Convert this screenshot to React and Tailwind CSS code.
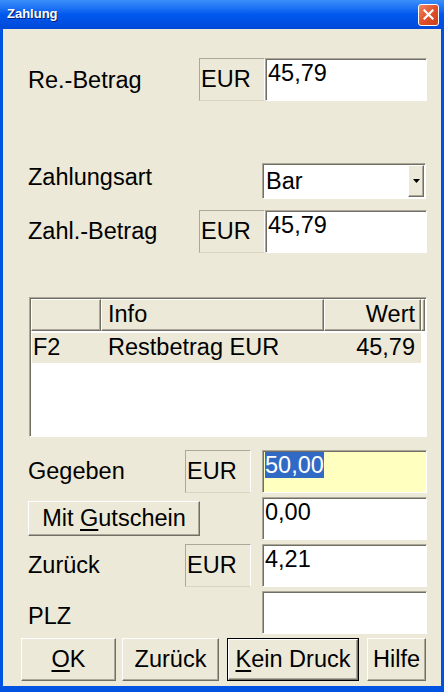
import React from "react";

// raised 3D edge of a classic dialog button
const raised =
  "border-t border-l border-t-white border-l-white border-b border-r border-b-[#716F64] border-r-[#716F64] shadow-[inset_-1px_-1px_0_#ACA899]";

// sunken edge of an edit field
const sunken =
  "border-t border-l border-t-[#ACA899] border-l-[#ACA899] border-b border-r border-b-white border-r-white shadow-[inset_1px_1px_0_#716F64]";

function CurrencyBox() {
  return (
    <div className="w-[66px] h-full flex items-center pl-[1px] border-t border-l border-t-[#ACA899] border-l-[#ACA899] border-b border-r border-b-[#D8D4C4] border-r-white bg-[#ECE9D8]">
      EUR
    </div>
  );
}

function Field({ value, width = "w-[162px]", yellow = false, selected = false }) {
  return (
    <div
      className={`${width} h-full ${sunken} ${yellow ? "bg-[#FFFFC0]" : "bg-white"} pl-[2px] pt-[1px] leading-[27px]`}
    >
      {selected ? (
        <span className="bg-[#316AC5] text-white">{value}</span>
      ) : (
        value
      )}
    </div>
  );
}

function Button({ children, className = "", isDefault = false }) {
  if (isDefault) {
    return (
      <div className={`border border-black ${className}`}>
        <div className={`w-full h-full flex items-center justify-center bg-[#ECE9D8] ${raised}`}>
          {children}
        </div>
      </div>
    );
  }
  return (
    <div className={`flex items-center justify-center bg-[#ECE9D8] ${raised} ${className}`}>
      {children}
    </div>
  );
}

export default function App() {
  return (
    <div className="w-[444px] h-[692px] flex flex-col bg-[#0053E1] px-[3px] pb-[6px] font-['Liberation_Sans',Arial,sans-serif] text-[23.5px] text-black select-none">
      {/* title bar */}
      <div className="h-[29px] -mx-[3px] flex items-center justify-between pl-[7px] pr-[5px] bg-gradient-to-b from-[#3C8FFA] via-[#0058EE] to-[#0049D8]">
        <span className="text-white font-bold text-[13px] [text-shadow:1px_1px_0_#0A1E6E] -mt-[1px]">
          Zahlung
        </span>
        <div className="w-[21px] h-[22px] rounded-[3px] border border-white bg-gradient-to-br from-[#EE8660] via-[#E0502A] to-[#C8401C] flex items-center justify-center">
          <svg width="11" height="11" viewBox="0 0 11 11">
            <path d="M1.5 1.5 L9.5 9.5 M9.5 1.5 L1.5 9.5" stroke="white" strokeWidth="2.2" strokeLinecap="square" />
          </svg>
        </div>
      </div>

      {/* dialog body */}
      <div className="flex-1 bg-[#ECE9D8] pl-[25px] pr-[14px] flex flex-col">
        <div className="mt-[29px] h-[43px] flex items-center">
          <div className="w-[171px] pt-[3px]">Re.-Betrag</div>
          <CurrencyBox />
          <Field value="45,79" />
        </div>

        <div className="mt-[62px] h-[36px] flex items-center">
          <div className="w-[234px] -mt-[6px]">Zahlungsart</div>
          <div className={`w-[164px] h-full ${sunken} bg-white flex`}>
            <div className="flex-1 flex items-center pl-[3px] pt-[1px]">Bar</div>
            <div className={`w-[16px] my-[1px] mr-[1px] bg-[#ECE9D8] ${raised} flex items-center justify-center`}>
              <svg width="7" height="4" viewBox="0 0 7 4">
                <path d="M0 0 H7 L3.5 4 Z" fill="black" />
              </svg>
            </div>
          </div>
        </div>

        <div className="mt-[11px] h-[43px] flex items-center">
          <div className="w-[171px]">Zahl.-Betrag</div>
          <CurrencyBox />
          <Field value="45,79" />
        </div>

        {/* info list */}
        <div className={`mt-[44px] ml-[1px] w-[398px] h-[140px] ${sunken} bg-white flex flex-col pt-[1px] pl-[1px]`}>
          <div className="h-[32px] flex">
            <div className={`w-[70px] bg-[#ECE9D8] ${raised}`} />
            <div className={`w-[223px] bg-[#ECE9D8] ${raised} flex items-center pl-[6px]`}>Info</div>
            <div className={`w-[97px] bg-[#ECE9D8] ${raised} flex items-center justify-end pr-[5px]`}>Wert</div>
            <div className={`w-[4px] bg-[#ECE9D8] ${raised}`} />
          </div>
          <div className="mt-[2px] ml-[1px] w-[389px] h-[30px] bg-[#ECE9D8] flex items-center">
            <div className="w-[69px] pl-[1px]">F2</div>
            <div className="w-[223px] pl-[7px]">Restbetrag EUR</div>
            <div className="w-[91px] text-right">45,79</div>
          </div>
        </div>

        <div className="mt-[13px] h-[43px] flex items-center">
          <div className="w-[157px]">Gegeben</div>
          <CurrencyBox />
          <div className="w-[11px]" />
          <Field value="50,00" width="w-[165px]" yellow selected />
        </div>

        <div className="mt-[4px] h-[43px] flex items-center">
          <Button className="w-[172px] h-[35px]">
            <span>
              Mit <u className="underline-offset-[3px]">G</u>utschein
            </span>
          </Button>
          <div className="flex-1" />
          <Field value="0,00" width="w-[165px]" />
        </div>

        <div className="mt-[4px] h-[43px] flex items-center">
          <div className="w-[157px]">Zurück</div>
          <CurrencyBox />
          <div className="w-[11px]" />
          <Field value="4,21" width="w-[165px]" />
        </div>

        <div className="mt-[4px] h-[43px] flex items-center">
          <div className="w-[234px] pt-[9px]">PLZ</div>
          <Field value="" width="w-[165px]" />
        </div>

        {/* dialog buttons */}
        <div className="mt-[4px] h-[43px] flex -ml-[7px]">
          <Button className="w-[95px] h-full">
            <span>
              <u className="underline-offset-[3px]">O</u>K
            </span>
          </Button>
          <Button className="w-[97px] h-full ml-[6px]">Zurück</Button>
          <Button className="w-[132px] h-full ml-[8px]" isDefault>
            <span>
              <u className="underline-offset-[3px]">K</u>ein Druck
            </span>
          </Button>
          <Button className="w-[59px] h-full ml-[8px]">Hilfe</Button>
        </div>
      </div>
    </div>
  );
}
